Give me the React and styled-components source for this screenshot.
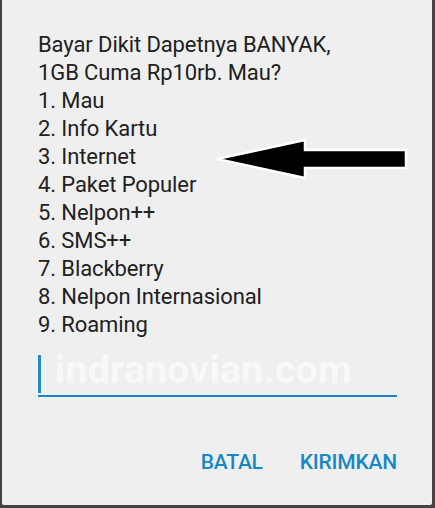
import React from 'react';
import styled, { createGlobalStyle } from 'styled-components';

const GlobalStyle = createGlobalStyle`
  html, body {
    margin: 0;
    padding: 0;
    background: #3e3e3e;
  }
  body {
    font-family: Roboto, 'Noto Sans', Arial, sans-serif;
  }
`;

const Screen = styled.div`
  width: 435px;
  height: 508px;
  display: flex;
  background: #444444;
`;

const Dialog = styled.div`
  position: relative;
  flex: 1;
  margin: 0 3px 3px 2px;
  background: #efefef;
  border-radius: 0 0 2px 2px;
  display: flex;
  flex-direction: column;
  padding: 31px 35px 0 36px;
`;

const Message = styled.div`
  font-size: 22px;
  line-height: 28px;
  color: #212121;
  letter-spacing: -0.1px;
`;

const Line = styled.div`
  white-space: nowrap;
`;

const Field = styled.div`
  position: relative;
  margin-top: 8px;
  height: 48px;
  border-bottom: 2px solid #1787c0;
  display: flex;
  align-items: flex-end;
`;

const Caret = styled.span`
  width: 3px;
  height: 38px;
  margin-bottom: 2px;
  background: #1f8dc4;
`;

const Watermark = styled.span`
  position: absolute;
  left: 17px;
  top: 0px;
  font-size: 39px;
  font-weight: 700;
  color: #f8f8f8;
  letter-spacing: 0.3px;
  white-space: nowrap;
`;

const Actions = styled.div`
  display: flex;
  justify-content: flex-end;
  gap: 37px;
  margin-top: 53px;
`;

const ActionButton = styled.button`
  border: none;
  background: none;
  padding: 0;
  font-family: Roboto, Arial, sans-serif;
  font-size: 21px;
  font-weight: 500;
  line-height: 24px;
  color: #1689c5;
  letter-spacing: -0.2px;
`;

const Pointer = styled.svg`
  position: absolute;
  left: 211px;
  top: 137px;
`;

const lines = [
  'Bayar Dikit Dapetnya BANYAK,',
  '1GB Cuma Rp10rb. Mau?',
  '1. Mau',
  '2. Info Kartu',
  '3. Internet',
  '4. Paket Populer',
  '5. Nelpon++',
  '6. SMS++',
  '7. Blackberry',
  '8. Nelpon Internasional',
  '9. Roaming',
];

export default function App() {
  return (
    <>
      <GlobalStyle />
      <Screen>
        <Dialog>
          <Message>
            {lines.map((l) => (
              <Line key={l}>{l}</Line>
            ))}
          </Message>
          <Field>
            <Caret />
            <Watermark>indranovian.com</Watermark>
          </Field>
          <Actions>
            <ActionButton>BATAL</ActionButton>
            <ActionButton>KIRIMKAN</ActionButton>
          </Actions>
          <Pointer width="200" height="46" viewBox="0 0 200 46">
            <polygon
              points="4,22 92,3 92,13 193,13 193,31 92,31 92,41"
              fill="#000"
              stroke="#fff"
              strokeWidth="2.5"
              strokeLinejoin="miter"
            />
          </Pointer>
        </Dialog>
      </Screen>
    </>
  );
}
